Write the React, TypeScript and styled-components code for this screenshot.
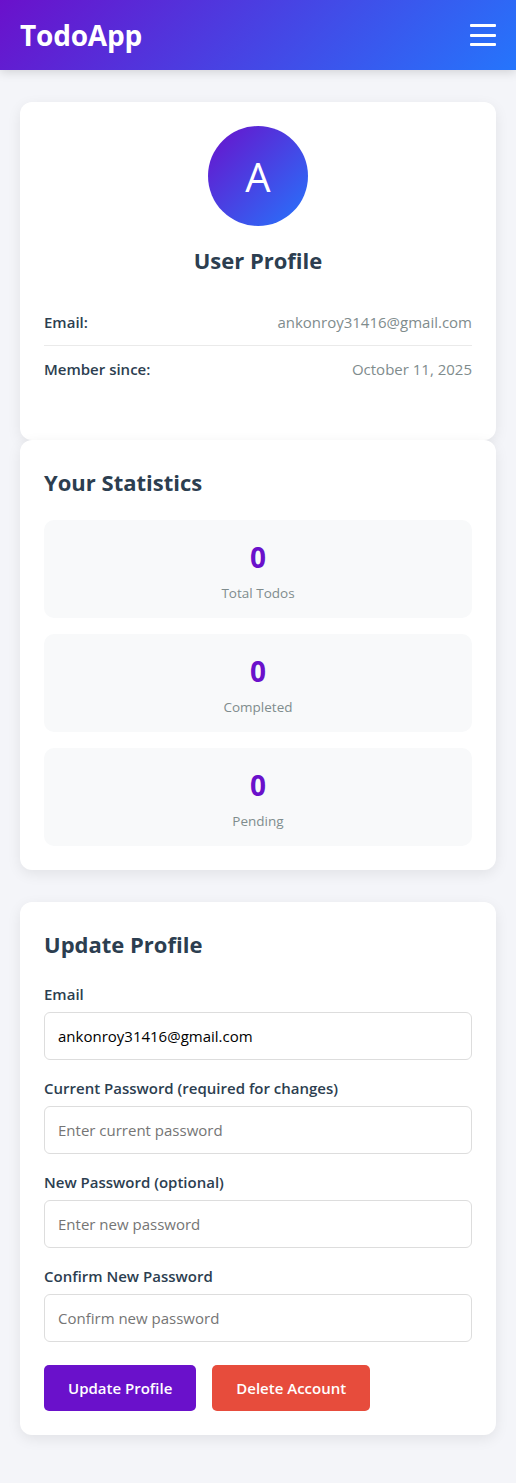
import React from "react";
import styled, { createGlobalStyle } from "styled-components";

const Global = createGlobalStyle`
  * { box-sizing: border-box; }
  html, body { margin: 0; padding: 0; }
  body {
    background: #f4f5f9;
    font-family: "Segoe UI", "Open Sans", "Noto Sans", sans-serif;
    color: #2c3e50;
  }
`;

const Header = styled.header`
  height: 70px;
  padding: 0 20px;
  display: flex;
  align-items: center;
  justify-content: space-between;
  background: linear-gradient(135deg, #6a11cb 0%, #2575fc 100%);
  box-shadow: 0 2px 10px rgba(0, 0, 0, 0.15);
`;

const Logo = styled.div`
  color: #fff;
  font-size: 28px;
  font-weight: 700;
  letter-spacing: -0.2px;
`;

const Burger = styled.button`
  width: 26px;
  height: 22px;
  padding: 0;
  border: none;
  background: transparent;
  display: flex;
  flex-direction: column;
  justify-content: space-between;
  cursor: pointer;
`;

const BurgerLine = styled.span`
  display: block;
  height: 3px;
  background: #fff;
  border-radius: 1px;
`;

const Main = styled.main`
  padding: 32px 20px 48px;
  display: flex;
  flex-direction: column;
`;

const Card = styled.section<{ $gapAfter?: number }>`
  background: #fff;
  border-radius: 12px;
  box-shadow: 0 4px 14px rgba(0, 0, 0, 0.08);
  padding: 24px;
  margin-bottom: ${(p) => p.$gapAfter ?? 0}px;
`;

const ProfileTop = styled.div`
  display: flex;
  flex-direction: column;
  align-items: center;
`;

const Avatar = styled.div`
  width: 100px;
  height: 100px;
  border-radius: 50%;
  background: linear-gradient(135deg, #6a11cb 0%, #2575fc 100%);
  color: #fff;
  font-size: 40px;
  display: flex;
  align-items: center;
  justify-content: center;
`;

const ProfileTitle = styled.h2`
  margin: 20px 0 25px;
  font-size: 22px;
  line-height: 28px;
  font-weight: 700;
  color: #2c3e50;
`;

const InfoRow = styled.div<{ $border?: boolean }>`
  display: flex;
  justify-content: space-between;
  align-items: center;
  padding: 12px 0;
  line-height: 22px;
  border-bottom: ${(p) => (p.$border ? "1px solid #eaeaea" : "none")};
  font-size: 15px;
`;

const InfoLabel = styled.span`
  font-weight: 600;
  color: #2c3e50;
`;

const InfoValue = styled.span`
  color: #7f8c8d;
`;

const ProfileBody = styled.div`
  padding-bottom: 24px;
`;

const SectionTitle = styled.h2`
  margin: 4px 0 24px;
  font-size: 22px;
  line-height: 28px;
  font-weight: 700;
  color: #2c3e50;
`;

const StatList = styled.div`
  display: flex;
  flex-direction: column;
  gap: 16px;
`;

const StatBox = styled.div`
  background: #f8f9fa;
  border-radius: 10px;
  height: 98px;
  padding-top: 23px;
  display: flex;
  flex-direction: column;
  align-items: center;
`;

const StatNumber = styled.div`
  color: #6a11cb;
  font-size: 28px;
  font-weight: 700;
  line-height: 28px;
  margin-bottom: 13px;
`;

const StatLabel = styled.div`
  color: #7f8c8d;
  font-size: 13.5px;
  line-height: 18px;
`;

const Form = styled.form`
  display: flex;
  flex-direction: column;
  padding-top: 2px;
`;

const Field = styled.div`
  display: flex;
  flex-direction: column;
  margin-bottom: 18px;
`;

const Label = styled.label`
  font-size: 15px;
  line-height: 20px;
  font-weight: 600;
  color: #2c3e50;
  margin-bottom: 8px;
`;

const Input = styled.input`
  height: 48px;
  padding: 0 13px;
  border: 1px solid #dddddd;
  border-radius: 6px;
  font-family: inherit;
  font-size: 15px;
  color: #000;
  &::placeholder {
    color: #757575;
  }
`;

const Actions = styled.div`
  display: flex;
  gap: 16px;
  margin-top: 5px;
`;

const Button = styled.button<{ $variant: "primary" | "danger" }>`
  height: 46px;
  padding: 0 24px;
  border: none;
  border-radius: 5px;
  color: #fff;
  font-family: inherit;
  font-size: 15px;
  font-weight: 600;
  background: ${(p) => (p.$variant === "primary" ? "#6a11cb" : "#e74c3c")};
  cursor: pointer;
`;

const stats = [
  { value: 0, label: "Total Todos" },
  { value: 0, label: "Completed" },
  { value: 0, label: "Pending" },
];

const fields = [
  { label: "Email", value: "ankonroy31416@gmail.com", placeholder: "", type: "email" },
  { label: "Current Password (required for changes)", value: "", placeholder: "Enter current password", type: "password" },
  { label: "New Password (optional)", value: "", placeholder: "Enter new password", type: "password" },
  { label: "Confirm New Password", value: "", placeholder: "Confirm new password", type: "password" },
];

export default function App() {
  return (
    <>
      <Global />
      <Header>
        <Logo>TodoApp</Logo>
        <Burger aria-label="Menu">
          <BurgerLine />
          <BurgerLine />
          <BurgerLine />
        </Burger>
      </Header>
      <Main>
        <Card>
          <ProfileTop>
            <Avatar>A</Avatar>
            <ProfileTitle>User Profile</ProfileTitle>
          </ProfileTop>
          <ProfileBody>
            <InfoRow $border>
              <InfoLabel>Email:</InfoLabel>
              <InfoValue>ankonroy31416@gmail.com</InfoValue>
            </InfoRow>
            <InfoRow>
              <InfoLabel>Member since:</InfoLabel>
              <InfoValue>October 11, 2025</InfoValue>
            </InfoRow>
          </ProfileBody>
        </Card>
        <Card $gapAfter={32}>
          <SectionTitle>Your Statistics</SectionTitle>
          <StatList>
            {stats.map((s) => (
              <StatBox key={s.label}>
                <StatNumber>{s.value}</StatNumber>
                <StatLabel>{s.label}</StatLabel>
              </StatBox>
            ))}
          </StatList>
        </Card>
        <Card>
          <SectionTitle>Update Profile</SectionTitle>
          <Form onSubmit={(e) => e.preventDefault()}>
            {fields.map((f) => (
              <Field key={f.label}>
                <Label>{f.label}</Label>
                <Input type={f.type} defaultValue={f.value} placeholder={f.placeholder} />
              </Field>
            ))}
            <Actions>
              <Button type="submit" $variant="primary">Update Profile</Button>
              <Button type="button" $variant="danger">Delete Account</Button>
            </Actions>
          </Form>
        </Card>
      </Main>
    </>
  );
}
